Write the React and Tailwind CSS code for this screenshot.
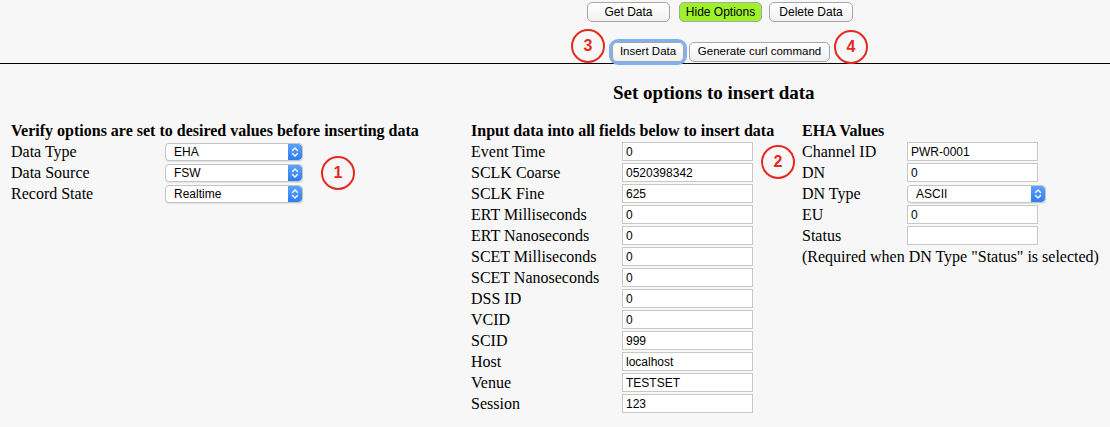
import React from 'react';

const serif = { fontFamily: '"Liberation Serif", "Times New Roman", serif' };

const Btn = ({ children, size = 'text-[12px]', className = '' }) => (
  <button
    className={`h-[20px] rounded-[5px] border border-[#a6a6a6] bg-gradient-to-b from-white to-[#f1f1f1] ${size} leading-none text-black font-['Liberation_Sans',Arial,sans-serif] ${className}`}
  >
    {children}
  </button>
);

const Circle = ({ n, className = '' }) => (
  <div
    className={`absolute w-[34px] h-[34px] rounded-full border-2 border-[#e8281f] flex items-center justify-center text-[#e8281f] font-bold text-[16px] font-['Liberation_Sans',Arial,sans-serif] ${className}`}
  >
    {n}
  </div>
);

const Stepper = () => (
  <div className="w-[14px] h-full bg-gradient-to-b from-[#5aa2fb] to-[#2f7cf5] rounded-r-[4px] flex items-center justify-center">
    <svg width="8" height="12" viewBox="0 0 8 12" fill="none" stroke="white" strokeWidth="1.4" strokeLinecap="round" strokeLinejoin="round">
      <path d="M1.5 4.5 L4 2 L6.5 4.5" />
      <path d="M1.5 7.5 L4 10 L6.5 7.5" />
    </svg>
  </div>
);

const Select = ({ value, w }) => (
  <div className={`${w} h-[18px] flex items-center bg-white border border-[#c4c4c4] rounded-[4px] overflow-hidden shadow-[0_1px_1px_rgba(0,0,0,0.08)]`}>
    <span className="flex-1 pl-[8px] text-[12px] leading-none font-['Liberation_Sans',Arial,sans-serif]">{value}</span>
    <Stepper />
  </div>
);

const Input = ({ value, w = 'w-[131px]' }) => (
  <div className={`${w} h-[19px] flex items-center bg-white border border-[#c8c8c8] pl-[3px] text-[12px] leading-none font-['Liberation_Sans',Arial,sans-serif]`}>
    {value}
  </div>
);

const Row = ({ label, lw, children }) => (
  <div className="flex items-center h-[21px]">
    <div className={`${lw} text-[16px] leading-[21px]`}>{label}</div>
    {children}
  </div>
);

const fields = [
  ['Event Time', '0'],
  ['SCLK Coarse', '0520398342'],
  ['SCLK Fine', '625'],
  ['ERT Milliseconds', '0'],
  ['ERT Nanoseconds', '0'],
  ['SCET Milliseconds', '0'],
  ['SCET Nanoseconds', '0'],
  ['DSS ID', '0'],
  ['VCID', '0'],
  ['SCID', '999'],
  ['Host', 'localhost'],
  ['Venue', 'TESTSET'],
  ['Session', '123'],
];

export default function App() {
  return (
    <div className="relative w-[1110px] h-[427px] overflow-hidden bg-[#f7f7f7] text-black" style={serif}>
      {/* Top buttons */}
      <div className="pt-[2px] pl-[587px] flex">
        <Btn className="w-[83px]">Get Data</Btn>
        <Btn className="w-[83px] ml-[9px] !bg-none bg-[#9ef22c] border-[#8cc73a]">Hide Options</Btn>
        <Btn className="w-[84px] ml-[7px]">Delete Data</Btn>
      </div>
      <div className="mt-[21px] pl-[612px] flex items-end h-[19px]">
        <div className="rounded-[6px] ring-[3px] ring-[#7fb0ef] flex">
          <Btn size="text-[11.5px]" className="w-[72px] h-[17px] rounded-[4px]">Insert Data</Btn>
        </div>
        <Btn size="text-[11.5px]" className="w-[141px] h-[18px] ml-[5px] rounded-[4px]">Generate curl command</Btn>
      </div>
      <div className="h-[1px] bg-black mt-[1px]" />

      <div className="mt-[18px] pl-[613px] text-[19px] font-bold leading-[22px]">Set options to insert data</div>

      {/* Columns */}
      <div className="mt-[17px] flex">
        <div className="pl-[11px] w-[471px]">
          <div className="text-[16px] font-bold leading-[20px]">Verify options are set to desired values before inserting data</div>
          <Row label="Data Type" lw="w-[154px]"><Select value="EHA" w="w-[138px]" /></Row>
          <Row label="Data Source" lw="w-[154px]"><Select value="FSW" w="w-[138px]" /></Row>
          <Row label="Record State" lw="w-[154px]"><Select value="Realtime" w="w-[138px]" /></Row>
        </div>
        <div className="w-[331px]">
          <div className="text-[16px] font-bold leading-[20px]">Input data into all fields below to insert data</div>
          {fields.map(([l, v]) => (
            <Row key={l} label={l} lw="w-[151px]"><Input value={v} /></Row>
          ))}
        </div>
        <div className="flex-1">
          <div className="text-[16px] font-bold leading-[20px]">EHA Values</div>
          <Row label="Channel ID" lw="w-[105px]"><Input value="PWR-0001" /></Row>
          <Row label="DN" lw="w-[105px]"><Input value="0" /></Row>
          <Row label="DN Type" lw="w-[105px]"><Select value="ASCII" w="w-[139px]" /></Row>
          <Row label="EU" lw="w-[105px]"><Input value="0" /></Row>
          <Row label="Status" lw="w-[105px]"><Input value="" /></Row>
          <div className="text-[16px] leading-[21px]">(Required when DN Type "Status" is selected)</div>
        </div>
      </div>

      <Circle n="3" className="left-[571px] top-[29px]" />
      <Circle n="4" className="left-[834px] top-[30px]" />
      <Circle n="1" className="left-[321px] top-[156px]" />
      <Circle n="2" className="left-[761px] top-[145px]" />
    </div>
  );
}
